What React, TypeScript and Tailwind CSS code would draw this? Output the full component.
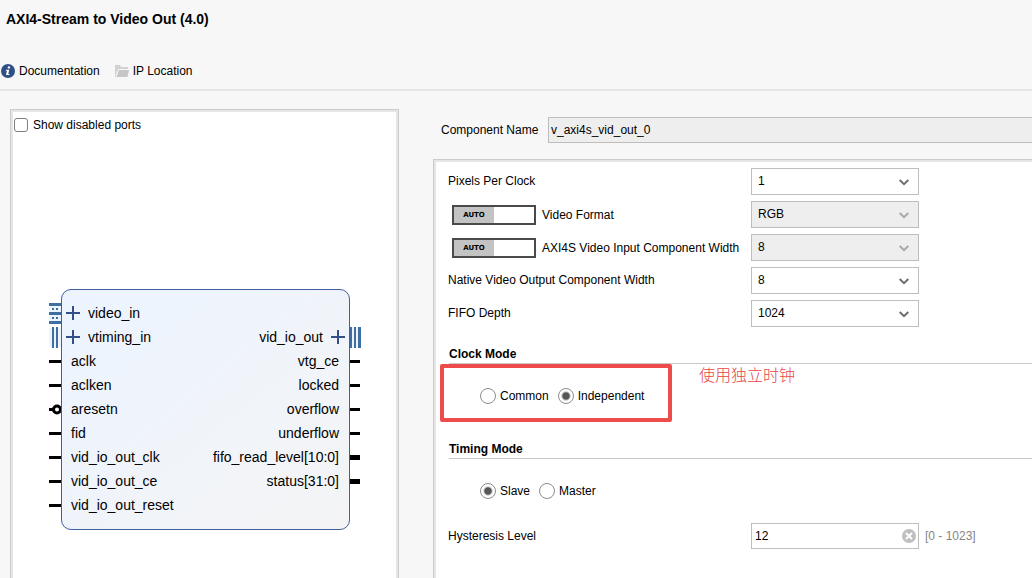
import { useState, type ReactNode } from "react";

type PortKind = "bus-in" | "bus-timing" | "bus-out" | "wire" | "wire-inverted" | "wire-vector";

interface Port {
  name: string;
  kind: PortKind;
}

const inputs: Port[] = [
  { name: "video_in", kind: "bus-in" },
  { name: "vtiming_in", kind: "bus-timing" },
  { name: "aclk", kind: "wire" },
  { name: "aclken", kind: "wire" },
  { name: "aresetn", kind: "wire-inverted" },
  { name: "fid", kind: "wire" },
  { name: "vid_io_out_clk", kind: "wire" },
  { name: "vid_io_out_ce", kind: "wire" },
  { name: "vid_io_out_reset", kind: "wire" },
];

const outputs: Port[] = [
  { name: "vid_io_out", kind: "bus-out" },
  { name: "vtg_ce", kind: "wire" },
  { name: "locked", kind: "wire" },
  { name: "overflow", kind: "wire" },
  { name: "underflow", kind: "wire" },
  { name: "fifo_read_level[10:0]", kind: "wire-vector" },
  { name: "status[31:0]", kind: "wire-vector" },
];

function InfoIcon() {
  return (
    <svg width="14" height="14" viewBox="0 0 14 14" aria-hidden="true">
      <circle cx="7" cy="7" r="7" fill="#2f4f87" />
      <circle cx="7.9" cy="3.4" r="1.2" fill="#fff" />
      <path d="M5 5.8h3.2L7.3 10h1.1v1H5l.9-4.2H4.8z" fill="#fff" />
    </svg>
  );
}

function FolderIcon() {
  return (
    <svg width="14" height="12" viewBox="0 0 14 12" aria-hidden="true">
      <path d="M0 0h5l1 2h7v2H3.500L1 9.500V12H0z" fill="#d2d2d2" />
      <path d="M4 5h10l-1.500 7H1.500z" fill="#c6c6c6" />
    </svg>
  );
}

function ExpandIcon() {
  return (
    <svg width="14" height="14" viewBox="0 0 14 14" aria-hidden="true">
      <path d="M6 0h2v6h6v2H8v6H6V8H0V6h6z" fill="#34508a" />
    </svg>
  );
}

function Stub({ kind, side }: { kind: PortKind; side: "left" | "right" }) {
  return (
    <svg
      width="13"
      height="24"
      viewBox="0 0 13 24"
      shapeRendering={kind === "wire-inverted" ? "auto" : "crispEdges"}
      className="block overflow-visible"
      aria-hidden="true"
    >
      {kind === "bus-in" && (
        <g fill="#3f6ea3">
          <rect x="1" y="2" width="12" height="21" fill="#eef4fd" />
          <rect x="1" y="2" width="12" height="3" />
          <rect x="1" y="11" width="12" height="3" />
          <rect x="1" y="20" width="12" height="3" />
          <rect x="4" y="7" width="2" height="2" />
          <rect x="8" y="7" width="2" height="2" />
          <rect x="4" y="16" width="2" height="2" />
          <rect x="8" y="16" width="2" height="2" />
        </g>
      )}
      {kind === "bus-timing" && (
        <g fill="#3f6ea3">
          <rect x="1" y="3" width="12" height="19" fill="#eef4fd" />
          <rect x="4" y="2" width="2" height="21" />
          <rect x="8" y="2" width="2" height="21" />
        </g>
      )}
      {kind === "bus-out" && (
        <g fill="#3f6ea3">
          <rect x="0" y="2" width="11" height="21" fill="#eef4fd" />
          <rect x="0" y="2" width="2" height="21" />
          <rect x="4" y="2" width="2" height="21" />
          <rect x="8" y="2" width="3" height="21" />
        </g>
      )}
      {kind === "wire" && <rect x={side === "left" ? 1 : 0} y="11" width={side === "left" ? 12 : 10} height="3" />}
      {kind === "wire-vector" && <rect x="0" y="10" width="10" height="5" />}
      {kind === "wire-inverted" && (
        <g>
          <rect x="1" y="11" width="5" height="3" />
          <circle cx="9" cy="12.500" r="3.500" fill="#fff" stroke="#000" strokeWidth="3" />
        </g>
      )}
    </svg>
  );
}

function BlockDiagram() {
  return (
    <div className="mr-[33px] ml-[35px] flex text-sm leading-6">
      <div className="flex w-[13px] shrink-0 flex-col pt-3">
        {inputs.map((p) => (
          <Stub key={p.name} kind={p.kind} side="left" />
        ))}
      </div>
      <div className="flex flex-1 justify-between rounded-[10px] border border-[#3f5f9f] bg-linear-to-br from-[#ecf4ff] to-[#f4f4f5] pt-[11px] pb-3">
        <ul className="pl-1">
          {inputs.map((p) => (
            <li key={p.name} className="flex h-6 items-center">
              {p.kind.startsWith("bus") ? (
                <button type="button" aria-label={"Expand " + p.name} className="mr-2">
                  <ExpandIcon />
                </button>
              ) : (
                <span className="w-[5px]" />
              )}
              {p.name}
            </li>
          ))}
        </ul>
        <ul className="pt-6 pr-1">
          {outputs.map((p) => (
            <li key={p.name} className="flex h-6 items-center justify-end">
              {p.name}
              {p.kind === "bus-out" ? (
                <button type="button" aria-label={"Expand " + p.name} className="ml-2">
                  <ExpandIcon />
                </button>
              ) : (
                <span className="w-[6px]" />
              )}
            </li>
          ))}
        </ul>
      </div>
      <div className="flex w-[13px] shrink-0 flex-col pt-9">
        {outputs.map((p) => (
          <Stub key={p.name} kind={p.kind} side="right" />
        ))}
      </div>
    </div>
  );
}

function Panel({ className, children }: { className: string; children: ReactNode }) {
  return (
    <div className={"border border-b-0 border-[#cbcbcb] " + className}>
      <div className="h-full border-2 border-b-0 border-[#e6e6e6] bg-white">{children}</div>
    </div>
  );
}

interface SelectRowProps {
  id: string;
  label: string;
  value: string;
  auto?: boolean;
}

function SelectRow({ id, label, value, auto = false }: SelectRowProps) {
  return (
    <div className="flex h-[27px] items-center">
      <div className="flex w-[303px] shrink-0 items-center">
        {auto && (
          <button
            type="button"
            role="switch"
            aria-checked="true"
            aria-label={label + " auto"}
            className="mr-[6px] ml-1 flex h-5 w-[84px] shrink-0 border-2 border-[#4a4a4a] bg-white"
          >
            <span className="flex h-full w-10 items-center justify-center bg-[#c3c3c3] pt-px font-['DejaVu_Sans',sans-serif] text-[7px] leading-3 font-bold">
              AUTO
            </span>
          </button>
        )}
        <label htmlFor={id} className={auto ? "whitespace-nowrap" : "pb-[2px] whitespace-nowrap"}>
          {label}
        </label>
      </div>
      <div className="relative w-[168px] shrink-0">
        <select
          id={id}
          disabled={auto}
          defaultValue={value}
          className="block h-[27px] w-full appearance-none border border-[#bdbdbd] bg-white pr-6 pb-[2px] pl-[6px] text-black opacity-100 disabled:bg-[#eeeeee]"
        >
          <option>{value}</option>
        </select>
        <svg
          width="10"
          height="7"
          viewBox="0 0 10 7"
          className={
            auto
              ? "pointer-events-none absolute top-[11px] right-[10px] text-[#a8a8a8]"
              : "pointer-events-none absolute top-[11px] right-[10px] text-[#6e6e6e]"
          }
          aria-hidden="true"
        >
          <path d="M.7 1 5 5.200 9.300 1" fill="none" stroke="currentColor" strokeWidth="2" />
        </svg>
      </div>
    </div>
  );
}

interface RadioGroupProps {
  name: string;
  options: string[];
  initial: string;
}

function RadioGroup({ name, options, initial }: RadioGroupProps) {
  const [selected, setSelected] = useState(initial);
  return (
    <div className="flex h-4 items-center gap-[9px] pl-8" role="radiogroup" aria-label={name}>
      {options.map((o) => (
        <label key={o} className="flex items-center gap-1">
          <input
            type="radio"
            name={name}
            checked={selected === o}
            onChange={() => setSelected(o)}
            className="size-4 appearance-none rounded-full border border-[#8c8c8c] bg-white checked:bg-[radial-gradient(circle,#555_0,#555_3px,#fff_5px)]"
          />
          {o}
        </label>
      ))}
    </div>
  );
}

function SectionTitle({ children }: { children: ReactNode }) {
  return <h2 className="ml-px h-[18px] border-b border-[#c8c8c8] leading-4 font-bold">{children}</h2>;
}

export default function App() {
  const [level, setLevel] = useState("12");
  return (
    <div className="flex min-h-screen flex-col overflow-hidden bg-[#f7f7f7] font-['Liberation_Sans',Arial,sans-serif] text-[12px] leading-4 text-black">
      <header className="border-b-2 border-[#e5e5e5] pt-[11px] pb-[10px]">
        <h1 className="pl-[6px] text-[14px] font-bold">AXI4-Stream to Video Out (4.0)</h1>
        <nav className="mt-9 flex items-center gap-[15px] pl-px">
          <a href="#documentation" className="flex items-center gap-1">
            <InfoIcon />
            Documentation
          </a>
          <a href="#location" className="flex items-center gap-1">
            <FolderIcon />
            IP Location
          </a>
        </nav>
      </header>

      <main className="flex flex-1">
        <div className="flex shrink-0 pt-[18px] pl-[10px]">
          <Panel className="w-[389px]">
            <label className="flex h-6 items-center gap-[5px] pt-[2px] pl-px">
              <input
                type="checkbox"
                className="size-[14px] appearance-none rounded-[3px] border border-[#7f7f7f] bg-white checked:bg-[#2f4f87]"
              />
              Show disabled ports
            </label>
            <div className="pt-[153px] pb-12">
              <BlockDiagram />
            </div>
          </Panel>
        </div>

        <div className="ml-[34px] flex min-w-0 flex-1 flex-col pt-[26px]">
          <div className="flex items-center gap-[5px] pl-2">
            <label htmlFor="component-name" className="w-[102px] shrink-0 whitespace-nowrap">
              Component Name
            </label>
            <input
              id="component-name"
              readOnly
              value="v_axi4s_vid_out_0"
              className="h-[26px] min-w-0 flex-1 border border-r-0 border-[#bdbdbd] bg-[#eeeeee] pl-[2px]"
            />
          </div>

          <Panel className="mt-4 flex-1 border-r-0 *:border-r-0">
            <form className="pt-[6px] pl-3">
              <div className="flex flex-col gap-[6px]">
                <SelectRow id="ppc" label="Pixels Per Clock" value="1" />
                <SelectRow id="format" label="Video Format" value="RGB" auto />
                <SelectRow id="axi-width" label="AXI4S Video Input Component Width" value="8" auto />
                <SelectRow id="native-width" label="Native Video Output Component Width" value="8" />
                <SelectRow id="fifo" label="FIFO Depth" value="1024" />
              </div>

              <section className="relative mt-[19px]">
                <SectionTitle>Clock Mode</SectionTitle>
                <div className="mt-6">
                  <RadioGroup name="Clock Mode" options={["Common", "Independent"]} initial="Independent" />
                </div>
                <div className="pointer-events-none absolute top-[18px] -left-2 h-[58px] w-[232px] rounded-xs border-4 border-[#ee4b4b]" />
                <p className="pointer-events-none absolute top-4 left-[251px] font-['Noto_Sans_CJK_SC',sans-serif] text-base leading-6 font-light text-[#e84545]">
                  使用独立时钟
                </p>
              </section>

              <section className="mt-[37px]">
                <SectionTitle>Timing Mode</SectionTitle>
                <div className="mt-6">
                  <RadioGroup name="Timing Mode" options={["Slave", "Master"]} initial="Slave" />
                </div>
              </section>

              <div className="mt-6 flex items-center">
                <label htmlFor="hysteresis" className="w-[303px] shrink-0">
                  Hysteresis Level
                </label>
                <div className="relative w-[168px] shrink-0">
                  <input
                    id="hysteresis"
                    value={level}
                    onChange={(e) => setLevel(e.target.value)}
                    className="block h-[26px] w-full border border-[#bdbdbd] bg-white pr-6 pl-[3px]"
                  />
                  <button
                    type="button"
                    aria-label="Clear"
                    onClick={() => setLevel("")}
                    className="absolute top-[6px] right-[3px]"
                  >
                    <svg width="14" height="14" viewBox="0 0 14 14" aria-hidden="true">
                      <circle cx="7" cy="7" r="7" fill="#bfbfbf" />
                      <path d="m4 4 6 6m0-6-6 6" stroke="#fff" strokeWidth="2" />
                    </svg>
                  </button>
                </div>
                <span className="ml-[6px] whitespace-nowrap text-[#858585]">[0 - 1023]</span>
              </div>
            </form>
          </Panel>
        </div>
      </main>
    </div>
  );
}
